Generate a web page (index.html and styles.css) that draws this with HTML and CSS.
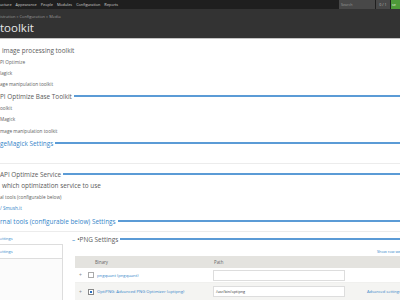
FILE: index.html
```html
<!DOCTYPE html>
<html>
<head>
<meta charset="utf-8">
<link rel="stylesheet" href="styles.css">
</head>
<body>
<div class="toolbar">
  <nav class="menu">
    <span>ucture</span><span>Appearance</span><span>People</span><span>Modules</span><span>Configuration</span><span>Reports</span>
  </nav>
  <div class="tools">
    <span class="search">Search</span>
    <span class="count">0 / 1</span>
    <span class="go">se</span>
  </div>
</div>
<header class="header">
  <div class="crumb">istration » Configuration » Media</div>
  <h1 class="title">toolkit</h1>
</header>
<main class="content">
  <div class="row big r1">image processing toolkit</div>
  <div class="row small r2">PI Optimize</div>
  <div class="row small r3">lagick</div>
  <div class="row small r4">age manipulation toolkit</div>
  <div class="row big legend r5"><span>PI Optimize Base Toolkit</span><i class="rule"></i></div>
  <div class="row small r6">oolkit</div>
  <div class="row small r7">Magick</div>
  <div class="row small r8">mage manipulation toolkit</div>
  <div class="row big legend link r9"><span>geMagick Settings</span><i class="rule"></i></div>
  <hr class="sep s1">
  <div class="row big legend r10"><span>API Optimize Service</span><i class="rule"></i></div>
  <div class="row big r11">which optimization service to use</div>
  <div class="row small r12">al tools (configurable below)</div>
  <div class="row small link r13">/ Smush.it</div>
  <div class="row big legend link r14"><span>rnal tools (configurable below) Settings</span><i class="rule"></i></div>
  <hr class="sep s2">
  <section class="vtabs">
    <div class="tablist">
      <div class="tab">ettings</div>
      <div class="tab selected">ettings</div>
      <div class="tabrest"></div>
    </div>
    <div class="pane">
      <div class="legend big pnglegend"><span class="toggle">–</span><span class="lg">•PNG Settings</span><i class="rule"></i></div>
      <div class="weights"><span>Show row weights</span></div>
      <div class="table">
        <div class="thead"><span class="c1">Binary</span><span class="c2">Path</span></div>
        <div class="trow">
          <span class="c1"><span class="drag">+</span><span class="cb"></span><span class="lnk">pngquant (pngquant)</span></span>
          <span class="c2"><span class="input"></span></span>
        </div>
        <div class="trow alt">
          <span class="c1"><span class="drag">+</span><span class="cb on"></span><span class="lnk">OptiPNG: Advanced PNG Optimizer (optipng)</span></span>
          <span class="c2"><span class="input">/usr/bin/optipng</span></span>
          <span class="c3">Advanced settings</span>
        </div>
      </div>
    </div>
  </section>
</main>
</body>
</html>
```
FILE: styles.css
```css
html, body { margin: 0; padding: 0; }
body {
  width: 400px; height: 300px; overflow: hidden; background: #fff;
  font-family: "Open Sans", "DejaVu Sans", sans-serif; color: #555;
}
.toolbar {
  height: 9px; background: #1f1f1f; display: flex; justify-content: space-between;
  align-items: stretch;
}
.menu { display: flex; gap: 4px; align-items: center; font-size: 3.8px; color: #cfcfcf; }
.tools { display: flex; align-items: stretch; font-size: 3.6px; }
.search { width: 34px; background: #484848; color: #999; padding-left: 2px; display: flex; align-items: center; margin-right: 1px; }
.count { width: 14px; background: #484848; color: #bbb; display: flex; align-items: center; justify-content: center; margin-right: 1px; }
.go { width: 8px; background: #4e9a3a; color: #e6f2e0; display: flex; align-items: center; padding-left: 1px; }
.header { height: 29px; background: #333; border-bottom: 1px solid #c4c4c4; }
.crumb { font-size: 4px; color: #9a9a9a; padding-top: 5px; line-height: 5px; }
.title { margin: 0; font-weight: 400; font-size: 11.5px; color: #e8e8e8; line-height: 12px; margin-top: 3px; }
.content { display: flex; flex-direction: column; }
.row { display: flex; align-items: center; white-space: nowrap; }
.big { font-size: 6.4px; color: #5a5a5a; }
.small { font-size: 4.7px; color: #5e5e5e; }
.link, .link span { color: #3485c9; }
.legend { display: flex; align-items: center; }
.rule { flex: 1; height: 1.5px; background: #5b9bd6; margin-left: 2px; display: block; }
.r1 { margin-top: 5px; height: 12px; padding-left: 2px; }
.r2 { height: 12px; }
.r3 { height: 10px; }
.r4 { height: 12px; }
.r5 { height: 12px; }
.r6 { height: 11px; }
.r7 { height: 12px; }
.r8 { height: 12px; }
.r9 { height: 12px; }
.sep { margin: 0; border: 0; height: 1px; background: #ececec; }
.s1 { margin-top: 14px; }
.r10 { margin-top: 4px; height: 12px; }
.r11 { height: 10px; padding-left: 2px; }
.r12 { margin-top: 1px; height: 12px; }
.r13 { height: 10px; }
.r14 { height: 16px; }
.s2 { margin-top: 2px; }
.vtabs { display: flex; }
.tablist { width: 63px; flex-shrink: 0; display: flex; flex-direction: column; }
.tab { font-size: 4px; color: #3485c9; height: 12px; display: flex; align-items: center; }
.tab.selected { height: 13px; background: #fff; border-top: 1px solid #ddd; border-bottom: 1px solid #ddd; border-right: 1px solid #ddd; }
.tabrest { height: 60px; background: #fbfbfb; border-right: 1px solid #ddd; }
.pane { flex: 1; min-width: 0; padding-left: 9px; display: flex; flex-direction: column; }
.pnglegend { height: 14px; }
.toggle { color: #3485c9; margin-right: 2px; }
.lg { color: #5a5a5a; }
.weights { height: 10px; display: flex; justify-content: flex-end; align-items: center; font-size: 3.8px; color: #3485c9; white-space: nowrap; }
.weights span { margin-right: -9px; }
.table { margin-left: 3px; display: flex; flex-direction: column; width: 360px; }
.thead { height: 12px; background: #e4e3df; display: flex; align-items: center; font-size: 4.4px; color: #666; }
.thead .c1 { width: 118px; padding-left: 20px; flex-shrink: 0; }
.thead .c2 { padding-left: 1px; }
.trow { height: 14px; display: flex; align-items: center; font-size: 4.2px; border-bottom: 1px solid #f0f0ee; white-space: nowrap; }
.trow.alt { background: #f4f4f2; height: 17px; }
.trow .c1 { width: 138px; flex-shrink: 0; display: flex; align-items: center; }
.drag { color: #888; width: 8px; padding-left: 4px; font-size: 5px; }
.cb { width: 4px; height: 4px; border: 0.7px solid #aaa; background: #fff; margin-right: 3px; margin-left: 1px; display: inline-block; }
.cb.on { background: radial-gradient(circle, #2a6fc0 45%, #fff 50%); border-color: #888; }
.lnk { color: #3485c9; }
.input { display: flex; align-items: center; width: 128px; height: 9px; border: 1px solid #ddd; background: #fff; font-size: 3.8px; color: #333; padding-left: 2px; }
.c3 { margin-left: 22px; color: #3485c9; font-size: 4px; }
```
